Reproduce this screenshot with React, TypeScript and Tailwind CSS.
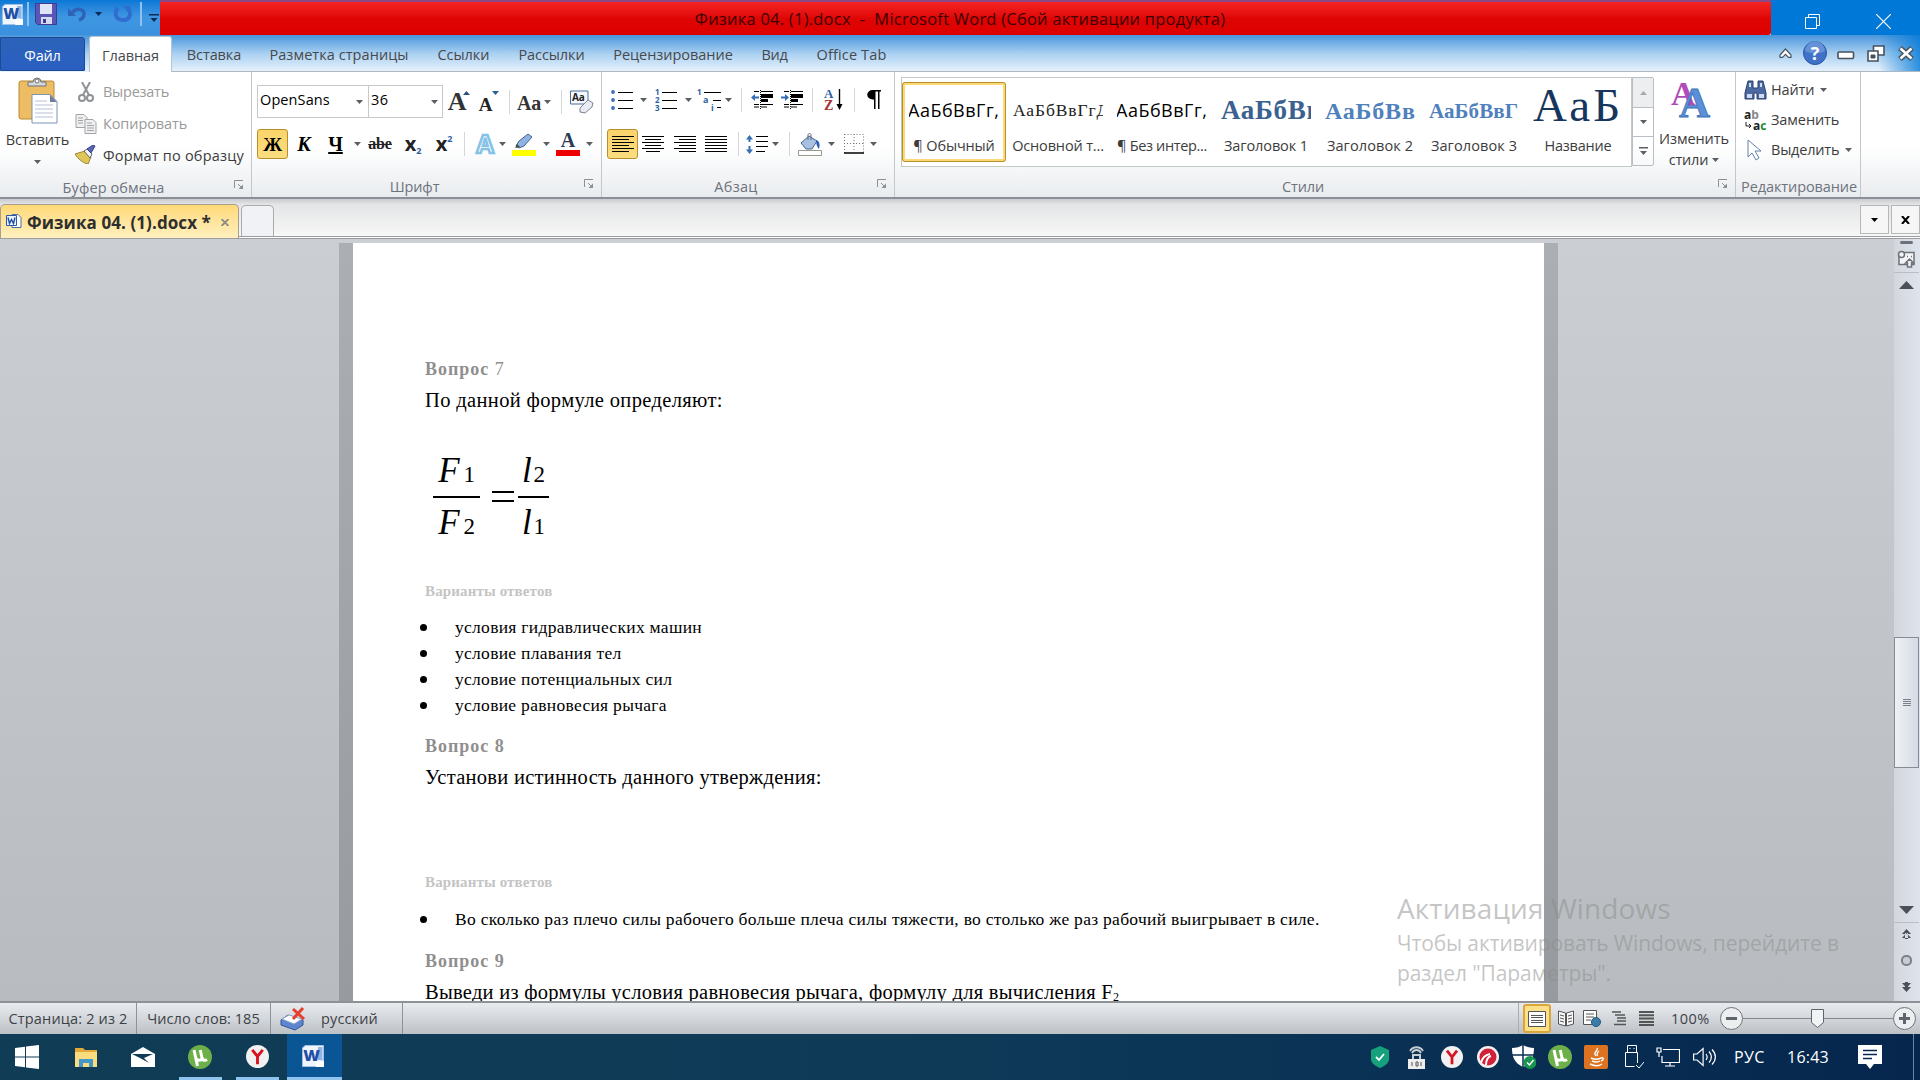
import type { ReactNode } from "react";

function Arrow({ className = "text-[#5a5f66]" }: { className?: string }) {
  return (
    <svg width="7" height="4" viewBox="0 0 7 4" className={className}>
      <path d="M0 0h7L3.500 4z" fill="currentColor" />
    </svg>
  );
}

function Launcher() {
  return (
    <svg width="10" height="10" viewBox="0 0 10 10" fill="none" stroke="#8b9097">
      <path d="M.5 8V.5H9" />
      <path d="M4 4l4 4" />
      <path d="M9 4.500V9H4.500z" fill="#8b9097" stroke="none" />
    </svg>
  );
}

function Cell({ className = "", children }: { className?: string; children?: ReactNode }) {
  return <div className={"flex h-full shrink-0 items-center justify-center whitespace-nowrap " + className}>{children}</div>;
}

function Sep({ className = "" }: { className?: string }) {
  return (
    <Cell className={className}>
      <div className="h-6 w-px bg-[#d3d6da]" />
    </Cell>
  );
}

function Group({ className = "", label, launcher = true, children }: { className?: string; label: ReactNode; launcher?: boolean; children: ReactNode }) {
  return (
    <div className={"flex h-full shrink-0 flex-col border-r border-[#c3c7cc] " + className}>
      <div className="h-[103px]">{children}</div>
      <div className="flex h-[23px] items-center text-[#6e737d]">
        <div className={"flex-1 pt-[2px] text-center " + (launcher ? "pr-[7px]" : "")}>{label}</div>
        {launcher && (
          <div className="-mt-1 w-[17px]">
            <Launcher />
          </div>
        )}
      </div>
    </div>
  );
}

function WordIcon({ size = 22 }: { size?: number }) {
  return (
    <svg width={size} height={size} viewBox="0 0 22 22">
      <path d="M3 .5h18.500v21H.5V3z" fill="#eef5fd" stroke="#9fc0e6" />
      <path d="M16 2h4.500v15H16z" fill="#8fb3e3" />
      <text x="9.500" y="15.500" textAnchor="middle" fontSize="16" fontWeight="800" fill="#1f4fa8">W</text>
      <path d="M13 17l4-2 5 1v6h-8z" fill="#fff" />
    </svg>
  );
}

function Lines({ rows }: { rows: number[][] }) {
  return (
    <svg width="22" height="17" viewBox="0 0 22 17">
      {rows.map(([x, w], i) => (
        <rect key={i} x={x} y={i * 3} width={w} height="1" fill="#000" />
      ))}
    </svg>
  );
}

const alignLeft = [[0, 22], [0, 17], [0, 22], [0, 17], [0, 22], [0, 17]];
const alignCenter = [[0, 22], [3, 16], [0, 22], [3, 16], [0, 22], [4, 14]];
const alignRight = [[0, 22], [5, 17], [0, 22], [5, 17], [0, 22], [5, 17]];
const alignJustify = [[0, 22], [0, 22], [0, 22], [0, 22], [0, 22], [0, 22]];

function TitleBar() {
  return (
    <div className="flex h-[35px]">
      <div className="flex h-full w-40 items-center bg-gradient-to-b from-[#0878d6] via-[#3f97e2] to-[#3a90de] pb-[7px]">
        <div className="ml-[2px] w-[25px]">
          <WordIcon size={21} />
        </div>
        <div className="mr-[6px] h-6 w-[2px] border-x border-[#8ec1ee] bg-[#2f72b5]" />
        <svg width="22" height="22" viewBox="0 0 22 22">
          <path d="M1 .5h20.500v21H2.500L.5 19.500V.5z" fill="#5b55b5" stroke="#3f3b93" />
          <path d="M5 1h12v10H5z" fill="#dfe5f6" />
          <path d="M6 14h11v7H6z" fill="#d6daee" />
          <path d="M8 16h3v4H8z" fill="#3f3b93" />
        </svg>
        <svg width="18" height="18" viewBox="0 0 18 18" className="ml-[11px]">
          <path d="M0 3v8h8z" fill="#2f63b8" />
          <path d="M4 8c4-6 12-4 12 1 0 3-2 5-5 6" fill="none" stroke="#2f63b8" strokeWidth="3.500" />
        </svg>
        <Arrow className="ml-[9px] text-[#0b2b50]" />
        <svg width="18" height="18" viewBox="0 0 18 18" className="ml-[12px]">
          <path d="M4 3C0 7 1 15 9 15s9-8 4-12" fill="none" stroke="#2f6ed0" strokeWidth="4" />
          <path d="M9 1h8l-2 7z" fill="#2f6ed0" />
        </svg>
        <div className="ml-[8px] h-6 w-[2px] border-x border-[#8ec1ee] bg-[#2f72b5]" />
        <svg width="10" height="8" viewBox="0 0 10 8" className="mt-2 ml-[7px]">
          <path d="M0 0h10v1.500H0zM1.500 4h7L5 8z" fill="#0b2b50" />
        </svg>
      </div>
      <div className="flex h-full w-[1611px] items-center justify-center rounded-br-[3px] border-t-2 border-[#8a4a86] bg-gradient-to-b from-[#f52222] via-[#df0505] to-[#dd0000] pt-[2px] pr-[11px] text-[16.500px] tracking-[0.23px] text-[#3d0000]">
        <span className="whitespace-pre">Физика 04. (1).docx  -  Microsoft Word (Сбой активации продукта)</span>
      </div>
      <div className="flex h-full flex-1 items-center bg-[#0078d7] pt-2">
        <svg width="15" height="15" viewBox="0 0 15 15" fill="none" stroke="#fff" className="ml-[34px]">
          <path d="M.5 3.500h11v11H.5zM3.500 3.500v-3h11v11h-3" />
        </svg>
        <svg width="15" height="15" viewBox="0 0 15 15" fill="none" stroke="#fff" className="ml-[56px]">
          <path d="M0 0l15 15M15 0L0 15" strokeWidth="1.200" />
        </svg>
      </div>
    </div>
  );
}

function MenuTabs() {
  return (
    <div className="flex h-[37px] bg-gradient-to-b from-[#4795dc] via-[#a9d0f1] to-[#e9f3fc] text-[#47494d]">
      <div className="mt-[2px] flex h-[34px] w-[85px] items-center justify-center rounded-tr-[3px] border border-[#1d4a94] bg-gradient-to-b from-[#2c63b8] to-[#2a5fc2] pt-[3px] tracking-[-0.2px] text-white">
        Файл
      </div>
      <div className="mt-px ml-1 flex h-[36px] w-[83px] items-center justify-center rounded-t-[3px] border border-b-0 border-[#b6c3d0] bg-white pt-[2px]">
        Главная
      </div>
      <div className="flex flex-1 items-center border-b border-[#aeb8c3]">
        <Cell className="ml-[15px] w-[54px] pt-[4px]">Вставка</Cell>
        <Cell className="ml-[28px] w-[140px] pt-[4px] tracking-[0.06px]">Разметка страницы</Cell>
        <Cell className="ml-[28px] w-[53px] pt-[4px] tracking-[-0.03px]">Ссылки</Cell>
        <Cell className="ml-[28px] w-[67px] pt-[4px]">Рассылки</Cell>
        <Cell className="ml-[28px] w-[120px] pt-[4px] tracking-[-0.03px]">Рецензирование</Cell>
        <Cell className="ml-[28px] w-[27px] pt-[4px] tracking-[-0.3px]">Вид</Cell>
        <Cell className="ml-[28px] w-[71px] pt-[4px] tracking-[0.15px]">Office Tab</Cell>
        <div className="flex h-full flex-1 items-center justify-end bg-gradient-to-l from-[#0078d7]/80 via-transparent via-[4%] to-transparent pr-[5px]">
          <svg width="13" height="10" viewBox="0 0 13 10" fill="#fff" stroke="#4a5661" strokeWidth="1.200">
            <path d="M1 7l5.500-6L12 7v2.400H9.500l-3-3-3 3H1z" />
          </svg>
          <svg width="24" height="24" viewBox="0 0 24 24" className="ml-[11px]">
            <circle cx="12" cy="12" r="11.500" fill="#3f72c8" stroke="#2a559f" />
            <path d="M2 10a10 10 0 0120 0c-6 3-14 3-20 0z" fill="#7ea6e2" opacity=".6" />
            <text x="12" y="18.500" textAnchor="middle" fontSize="18" fontWeight="700" fill="#fff">?</text>
          </svg>
          <svg width="18" height="9" viewBox="0 0 18 9" className="mt-1 ml-[10px]">
            <rect x="1" y="1" width="15.500" height="6.500" rx="1" fill="#fff" stroke="#46525e" strokeWidth="1.600" />
          </svg>
          <svg width="18" height="17" viewBox="0 0 18 17" fill="#fff" stroke="#46525e" strokeWidth="1.600" className="ml-[12px]">
            <path d="M6.500 1h10.500v9H6.500z" />
            <path d="M1 6h10v10H1z" />
            <path d="M4 10h4v3H4z" fill="#46525e" strokeWidth="1" />
          </svg>
          <svg width="18" height="15" viewBox="0 0 18 15" className="ml-[12px]">
            <path d="M3 2l12 11M15 2L3 13" stroke="#46525e" strokeWidth="5.500" />
            <path d="M3.500 2.500l11 10M14.500 2.500l-11 10" stroke="#fff" strokeWidth="2.600" />
          </svg>
        </div>
      </div>
    </div>
  );
}

function ClipboardGroup() {
  return (
    <Group className="w-[252px]" label={<span className="tracking-[0.1px]">Буфер обмена</span>}>
      <div className="flex h-full">
        <div className="flex w-[75px] flex-col items-center pt-[5px]">
          <svg width="40" height="47" viewBox="0 0 40 47">
            <rect x="1" y="4" width="35" height="38" rx="2" fill="#ecbd62" stroke="#b98a35" />
            <path d="M10 9V5h5a4 4 0 018 0h5v4z" fill="#d5d8dc" stroke="#6c7178" />
            <circle cx="19" cy="4" r="2" fill="#fff" stroke="#6c7178" />
            <path d="M14 17.500h18l7 7V46H14z" fill="#fff" stroke="#7d93b5" />
            <path d="M32 17.500V25h7z" fill="#6d7f9d" />
            <path d="M17 24h12M17 28h18M17 32h18M17 36h18M17 40h18" stroke="#b6c0d2" />
          </svg>
          <span className="mt-[4px] leading-6">Вставить</span>
          <Arrow className="mt-[8px] text-[#5a5f66]" />
        </div>
        <div className="flex flex-col">
          <div className="flex h-[43px] items-center tracking-[-0.25px] text-[#9a9a9a]">
            <svg width="22" height="20" viewBox="0 0 22 20" fill="none" stroke="#8f9398" strokeWidth="2" className="mr-[6px]">
              <path d="M7 0l7 13M15 0L8 13" />
              <circle cx="7" cy="16" r="3" />
              <circle cx="15" cy="16" r="3" />
            </svg>
            Вырезать
          </div>
          <div className="flex h-[22px] items-center text-[#9a9a9a]">
            <svg width="22" height="20" viewBox="0 0 22 20" fill="#f0f0f0" stroke="#a0a3a8" className="mr-[6px]">
              <path d="M1 .5h8l3 3v10H1z" />
              <path d="M10 5.500h8l3 3v11H10z" />
              <path d="M3 4h5M3 6.500h5M3 9h5M12 9h5M12 11.500h7M12 14h7M12 16.500h7" />
            </svg>
            <span className="pt-px">Копировать</span>
          </div>
          <div className="flex h-[43px] items-center tracking-[0.2px] whitespace-nowrap text-[#3c3c3c]">
            <svg width="22" height="19" viewBox="0 0 22 19" className="mr-[6px]">
              <path d="M0 9l10-3 6 6-3 7c-5-1-10-5-13-10z" fill="#e0c557" stroke="#9a8636" />
              <path d="M9 6l3-2 5 5-2 4z" fill="#f3f3f3" stroke="#666" />
              <path d="M12 4l6-4 2 1-4 7z" fill="#5967b8" stroke="#343f86" />
            </svg>
            <span className="pt-[2px]">Формат по образцу</span>
          </div>
        </div>
      </div>
    </Group>
  );
}

function FontGroup() {
  return (
    <Group className="w-[350px]" label="Шрифт">
      <div className="flex h-full flex-col pl-[5px]">
        <div className="mt-[13px] flex h-[33px]">
          <div className="flex w-[112px] items-center justify-between border border-[#c5c9ce] bg-white pr-[5px] pb-1 pl-[2px] text-black">
            <span className="tracking-[0.1px]">OpenSans</span>
            <Arrow className="mt-1 text-[#5a5f66]" />
          </div>
          <div className="-ml-px flex w-[75px] items-center justify-between border border-[#c5c9ce] bg-white pr-[4px] pb-1 pl-[2px] text-black">
            <span className="tracking-[0.4px]">36</span>
            <Arrow className="mt-1 text-[#5a5f66]" />
          </div>
          <Cell className="w-8 text-[#333]">
            <span className="text-[26px] leading-none font-bold [font-family:'Liberation_Serif']">A</span>
            <svg width="7" height="4" viewBox="0 0 7 4" className="-mt-[18px] -ml-[3px]"><path d="M0 4h7L3.500 0z" fill="#2b4f80" /></svg>
          </Cell>
          <Cell className="w-7 text-[#222]">
            <span className="mt-[5px] text-[19px] leading-none font-bold [font-family:'Liberation_Serif']">A</span>
            <Arrow className="-mt-[18px] text-[#2b5f90]" />
          </Cell>
          <Sep className="w-3" />
          <Cell className="w-7 text-[#333]"><span className="mt-[2px] text-[20px] leading-none font-bold [font-family:'Liberation_Serif']">Aa</span></Cell>
          <Cell className="w-[9px]"><Arrow /></Cell>
          <Sep className="w-[18px]" />
          <Cell className="w-6">
            <svg width="24" height="24" viewBox="0 0 24 24">
              <path d="M.5 1h17.500v13H.5z" fill="#f4f8fc" stroke="#4b6f9e" />
              <text x="2" y="11" fontSize="10" fontWeight="700" fill="#222">Aa</text>
              <path d="M10 18l8-8 5 3-1 4-7 6-5-1z" fill="#e9ebf3" stroke="#7d8497" />
            </svg>
          </Cell>
        </div>
        <div className="mt-[11px] flex h-[30px]">
          <Cell className="w-[31px] rounded-[3px] border border-[#b98f2c] bg-gradient-to-b from-[#fbd46a] to-[#fbdd80] text-black">
            <span className="text-[19px] leading-none font-bold [font-family:'Liberation_Serif']">Ж</span>
          </Cell>
          <Cell className="w-8 text-[20px] font-bold text-black italic [font-family:'Liberation_Serif']">К</Cell>
          <Cell className="w-[31px] text-[20px] font-bold text-black underline decoration-2 [font-family:'Liberation_Serif']">Ч</Cell>
          <Cell className="w-[13px]"><Arrow /></Cell>
          <Cell className="w-8 text-[16px] font-bold text-[#222] line-through [font-family:'Liberation_Serif']">abe</Cell>
          <Cell className="w-[34px] text-[#222]">
            <span className="text-[20px] leading-none font-bold">x</span>
            <span className="mt-3 text-[9px] leading-none font-bold text-[#2e5fa3]">2</span>
          </Cell>
          <Cell className="w-7 text-[#222]">
            <span className="text-[20px] leading-none font-bold">x</span>
            <span className="-mt-3 text-[9px] leading-none font-bold text-[#2e5fa3]">2</span>
          </Cell>
          <Sep className="w-[13px]" />
          <Cell className="w-[27px]">
            <svg width="24" height="24" viewBox="0 0 24 24">
              <text x="12" y="21" textAnchor="middle" fontSize="25" fontWeight="700" fill="#fff" stroke="#85c2e6" strokeWidth="2.500">A</text>
            </svg>
          </Cell>
          <Cell className="w-[9px]"><Arrow /></Cell>
          <Cell className="w-[34px]">
            <svg width="24" height="23" viewBox="0 0 24 23">
              <path d="M4 13l3-5 9-7 4 3-8 9-5 2z" fill="#8fb4e2" stroke="#46618f" />
              <path d="M3 15l2-4 3 3z" fill="#444" />
              <path d="M0 17h24v6H0z" fill="#ffff00" />
            </svg>
          </Cell>
          <Cell className="w-[10px]"><Arrow /></Cell>
          <Cell className="w-[34px]">
            <svg width="24" height="23" viewBox="0 0 24 23">
              <text x="12" y="14" textAnchor="middle" fontSize="20" fontWeight="700" fill="#2a3a57" fontFamily="Liberation Serif">A</text>
              <path d="M0 17h24v6H0z" fill="#ee0000" />
            </svg>
          </Cell>
          <Cell className="w-[8px]"><Arrow /></Cell>
        </div>
      </div>
    </Group>
  );
}

function Indent({ flip = false }: { flip?: boolean }) {
  return (
    <svg width="22" height="19" viewBox="0 0 22 19">
      <path d="M3 1.500h5M10 1.500h12M3 14.500h5M10 14.500h12M3 17h5M10 17h6" stroke="#000" />
      <path d="M9.500 0v19" stroke="#000" strokeDasharray="1 1" />
      <path d="M10 4h12v4H10zM10 9h7v3H10z" fill="#000" />
      <path d={flip ? "M8 7.500L4 4v2.500H0v2h4V11z" : "M0 7.500L4 4v2.500h4v2H4V11z"} fill="#3470b8" />
    </svg>
  );
}

function ParagraphGroup() {
  return (
    <Group className="w-[293px]" label={<span className="tracking-[0.3px]">Абзац</span>}>
      <div className="flex h-full flex-col pl-[5px]">
        <div className="mt-[13px] flex h-[29px]">
          <Cell className="w-[30px]">
            <svg width="22" height="20" viewBox="0 0 22 20">
              {[2, 10, 18].map((y) => (
                <g key={y}>
                  <circle cx="2" cy={y} r="1.900" fill="#3e6fb5" />
                  <path d={`M7 ${y + 0.5}h15`} stroke="#000" />
                </g>
              ))}
            </svg>
          </Cell>
          <Cell className="w-[13px]"><Arrow /></Cell>
          <Cell className="w-8">
            <svg width="22" height="22" viewBox="0 0 22 22">
              {[1, 2, 3].map((n) => (
                <g key={n}>
                  <text x="0" y={n * 8 - 2} fontSize="8" fontWeight="700" fill="#2e5fa3">{n}</text>
                  <path d={`M7 ${n * 8 - 4.5}h15`} stroke="#000" />
                </g>
              ))}
            </svg>
          </Cell>
          <Cell className="w-[13px]"><Arrow /></Cell>
          <Cell className="w-[29px]">
            <svg width="25" height="24" viewBox="0 0 25 24">
              <text x="0" y="7" fontSize="8" fontWeight="700" fill="#2e5fa3">1</text>
              <text x="6" y="15" fontSize="9" fontWeight="700" fill="#2e5fa3">a</text>
              <text x="14" y="23" fontSize="9" fontWeight="700" fill="#2e5fa3">i</text>
              <path d="M7 4.500h17M16 12.500h8M20 19.500h4" stroke="#000" />
            </svg>
          </Cell>
          <Cell className="w-[9px]"><Arrow /></Cell>
          <Sep className="w-4" />
          <Cell className="w-[25px]"><Indent /></Cell>
          <Cell className="w-[35px]"><Indent flip /></Cell>
          <Sep className="w-[6px]" />
          <Cell className="w-[37px]">
            <svg width="20" height="23" viewBox="0 0 20 23">
              <text x="0" y="10" fontSize="13" fontWeight="700" fill="#2e5fa3" fontFamily="Liberation Serif">A</text>
              <text x="0" y="22" fontSize="14" fontWeight="700" fill="#a33030" fontFamily="Liberation Serif">Z</text>
              <path d="M15.500 1v16" stroke="#000" strokeWidth="1.400" />
              <path d="M12.500 16h6l-3 6z" fill="#000" />
            </svg>
          </Cell>
          <Sep className="w-1" />
          <Cell className="w-9">
            <svg width="14" height="19" viewBox="0 0 14 19">
              <path d="M14 0H5.500a5 4.500 0 000 9.500H7V19h1.500V1.500h2.500V19h1.500V1.500H14z" fill="#000" />
            </svg>
          </Cell>
        </div>
        <div className="mt-[15px] flex h-[30px]">
          <Cell className="w-[31px] rounded-[3px] border border-[#b98f2c] bg-gradient-to-b from-[#fbd46a] to-[#fbdd80]"><Lines rows={alignLeft} /></Cell>
          <Cell className="w-[30px]"><Lines rows={alignCenter} /></Cell>
          <Cell className="w-[33px]"><Lines rows={alignRight} /></Cell>
          <Cell className="w-[30px]"><Lines rows={alignJustify} /></Cell>
          <Sep className="w-[14px]" />
          <Cell className="w-6">
            <svg width="22" height="19" viewBox="0 0 22 19">
              <path d="M3.500 0L7 4.500H4.500V7h-2V4.500H0zM3.500 19L7 14.500H4.500V11h-2v3.500H0z" fill="#3470b8" />
              <path d="M10 1.500h12M10 6.500h12M10 11.500h12M10 16.500h9" stroke="#000" />
            </svg>
          </Cell>
          <Cell className="w-[13px]"><Arrow /></Cell>
          <Sep className="w-[14px]" />
          <Cell className="w-7">
            <svg width="24" height="23" viewBox="0 0 24 23">
              <path d="M3 10l8-7 8 5-5 8H8z" fill="#a9c1e0" stroke="#4a6591" />
              <path d="M18 7c4 1 4 5 3 9-2-2-3-5-3-9z" fill="#2e5fb8" />
              <path d="M10 7V2c0-2 3-2 3 0v5" fill="none" stroke="#5d6b80" />
              <path d="M.5 17.500h23v5H.5z" fill="#fff" stroke="#9a9a8a" />
            </svg>
          </Cell>
          <Cell className="w-[14px]"><Arrow /></Cell>
          <Cell className="w-8">
            <svg width="20" height="20" viewBox="0 0 20 20">
              <path d="M.5.5h19v18M.5 0v19M10 0v18M0 9.500h20" fill="none" stroke="#777" strokeDasharray="1 2" />
              <path d="M0 19h20" stroke="#000" strokeWidth="1.500" />
            </svg>
          </Cell>
          <Cell className="w-[7px]"><Arrow /></Cell>
        </div>
      </div>
    </Group>
  );
}

const styles = [
  { name: "¶ Обычный", sample: "АаБбВвГг,", cls: "-ml-px text-[18px] tracking-[0.5px] text-black", label: "tracking-[-0.15px]" },
  { name: "Основной т...", sample: "АаБбВвГгД", cls: "text-[17.500px] tracking-[0.9px] text-[#222] [font-family:'Liberation_Serif']", label: "tracking-[-0.15px]" },
  { name: "¶ Без интер...", sample: "АаБбВвГг,", cls: "-ml-px text-[18px] tracking-[0.5px] text-black", label: "tracking-[-0.35px]" },
  { name: "Заголовок 1", sample: "АаБбВв", cls: "text-[27px] tracking-[0.7px] font-bold text-[#3a618f] [font-family:'Liberation_Serif']", label: "" },
  { name: "Заголовок 2", sample: "АаБбВв", cls: "text-[24px] tracking-[0.8px] font-bold text-[#4f81bd] [font-family:'Liberation_Serif']", label: "tracking-[0.1px]" },
  { name: "Заголовок 3", sample: "АаБбВвГ", cls: "pt-[2px] text-[21px] tracking-[0.1px] font-bold text-[#4f81bd] [font-family:'Liberation_Serif']", label: "tracking-[0.1px]" },
  { name: "Название", sample: "АаБ", cls: "-mt-[10px] text-[47px] tracking-[3px] text-[#17365d] [font-family:'Liberation_Serif']", label: "tracking-[-0.2px]" },
];

function StylesGroup() {
  return (
    <Group className="w-[841px]" label="Стили">
      <div className="flex pt-[5px] pl-[6px]">
        <div className="flex h-[90px] w-[731px] border border-[#c3cac5] bg-white pt-[4px]">
          {styles.map((s, i) => (
            <div key={s.name} className={"flex h-20 w-[104px] shrink-0 flex-col items-center rounded-[3px] " + (i === 0 ? "border-[3px] border-[#fcd876] outline outline-[#b98f2c] -outline-offset-1" : "py-[3px]")}>
              <div className="flex h-[51px] w-[90px] items-center overflow-hidden whitespace-nowrap">
                <span className={s.cls}>{s.sample}</span>
              </div>
              <span className={"leading-5 whitespace-nowrap " + s.label}>{s.name}</span>
            </div>
          ))}
        </div>
        <div className="flex h-[89px] w-[22px] flex-col rounded-r-[2px] border border-[#b9bec4]">
          <Cell className="h-[30px]! border-b border-[#b9bec4] bg-[#eceef0]"><svg width="7" height="4" viewBox="0 0 7 4"><path d="M0 4h7L3.500 0z" fill="#a5a9ae" /></svg></Cell>
          <Cell className="h-[29px]! border-b border-[#b9bec4]"><Arrow /></Cell>
          <Cell className="h-[28px]!">
            <svg width="9" height="8" viewBox="0 0 9 8"><path d="M0 0h9v1.500H0zM1 4h7L4.500 8z" fill="#5a5f66" /></svg>
          </Cell>
        </div>
        <div className="flex flex-1 flex-col items-center pt-[3px]">
          <svg width="40" height="39" viewBox="0 0 40 39" className="mr-[8px]">
            <text x="0" y="25" fontSize="34" fontWeight="700" fill="#b04cba" fontFamily="Liberation Serif">A</text>
            <text x="8" y="37" fontSize="43" fontWeight="700" fill="#5b8fd8" stroke="#3d6fb5" strokeWidth=".8" fontFamily="Liberation Serif">A</text>
          </svg>
          <span className="mt-[9px] mr-px leading-[21px]">Изменить</span>
          <span className="mr-px flex items-center gap-1 leading-[21px] tracking-[-0.2px]">стили <Arrow /></span>
        </div>
      </div>
    </Group>
  );
}

function EditingGroup() {
  return (
    <Group className="w-[125px]" launcher={false} label={<span className="ml-[2px]">Редактирование</span>}>
      <div className="flex flex-col pt-[3px] pl-2">
        <div className="flex h-[30px] items-center">
          <svg width="23" height="20" viewBox="0 0 23 20" className="mr-1">
            <path d="M4 1h5v7h5V1h5l3 12v6h-9v-6h-3v6H1v-6z" fill="#4c68a0" stroke="#2b3f6c" />
            <path d="M3 14h5v4H3zM15 14h5v4h-5zM5 3h2v4H5zM16 3h2v4h-2z" fill="#cfdbf0" />
          </svg>
          <span className="tracking-[-0.15px]">Найти</span>
          <Arrow className="ml-[6px] text-[#5a5f66]" />
        </div>
        <div className="flex h-[30px] items-center">
          <svg width="23" height="21" viewBox="0 0 23 21" className="mr-1">
            <text x="0" y="9" fontSize="12" fontWeight="700" fill="#222">a<tspan fill="#888">b</tspan></text>
            <text x="9" y="20" fontSize="12" fontWeight="700" fill="#222">a<tspan fill="#1d8a2b">c</tspan></text>
            <path d="M2 12v4h4M5 14l2 2-2 2" fill="none" stroke="#222" />
          </svg>
          <span className="tracking-[-0.1px]">Заменить</span>
        </div>
        <div className="flex h-[30px] items-center">
          <svg width="23" height="22" viewBox="0 0 23 22" className="mr-1">
            <path d="M4 1v17l4-4 4 7 3-2-4-7h6z" fill="#fff" stroke="#6580ad" />
          </svg>
          <span className="tracking-[-0.2px]">Выделить</span>
          <Arrow className="ml-[6px] text-[#5a5f66]" />
        </div>
      </div>
    </Group>
  );
}

function DocTabs() {
  return (
    <div className="flex h-[37px] items-end bg-gradient-to-b from-[#c9cbce] via-[#e4e5e6] via-[15%] to-[#f7f7f7]">
      <div className="relative z-10 -mb-[2px] flex h-[34px] w-[239px] items-center rounded-t-[5px] border border-b-0 border-[#a5a08e] bg-gradient-to-b from-[#ffd977] to-[#fff0bf] pt-[2px] pl-[5px] text-[#2e2e2e]">
        <svg width="16" height="16" viewBox="0 0 16 16" className="-mt-1">
          <path d="M6 1.500h6l3 3v10H6z" fill="#fff" stroke="#4e6fa6" />
          <path d="M.5 2.500h10v10H.5z" fill="#eaf2fc" stroke="#2f5aa5" />
          <path d="M2 4.500l1.500 6 2-4 2 4 1.500-6" fill="none" stroke="#1f4fa8" strokeWidth="1.400" />
        </svg>
        <span className="ml-[5px] text-[17px] tracking-[0.09px] font-bold whitespace-nowrap">Физика 04. (1).docx *</span>
        <svg width="8" height="7" viewBox="0 0 8 7" className="ml-[10px]"><path d="M.5 0l7 7M7.500 0l-7 7" stroke="#8a8a80" strokeWidth="1.800" /></svg>
      </div>
      <div className="ml-[2px] h-[31px] w-[33px] rounded-t-[5px] border border-b-0 border-[#a9abae] bg-[#f0f2f6]" />
      <div className="flex h-full flex-1 items-center justify-end pt-[4px]">
        <Cell className="mr-[2px] h-[29px]! w-[29px] border border-[#b5b7ba] bg-[#f6f6f6]"><Arrow className="text-black" /></Cell>
        <Cell className="h-[29px]! w-[29px] border border-[#b5b7ba] bg-[#f6f6f6]">
          <svg width="9" height="8" viewBox="0 0 9 8"><path d="M1 0l7 8M8 0L1 8" stroke="#000" strokeWidth="2" /></svg>
        </Cell>
      </div>
    </div>
  );
}

const answers = ["условия гидравлических машин", "условие плавания тел", "условие потенциальных сил", "условие равновесия рычага"];

function Answer({ text }: { text: string }) {
  return (
    <li className="flex h-[25.750px] items-center text-[17.500px] leading-[25px] tracking-[0.29px] whitespace-nowrap">
      <span className="-ml-[5px] h-[7px] w-[7px] rounded-full bg-black" />
      <span className="ml-[28px]">{text}</span>
    </li>
  );
}

function Fraction({ className, top, bottom }: { className: string; top: ReactNode; bottom: ReactNode }) {
  return (
    <div className={"flex flex-col items-center " + className}>
      <div className="flex h-9 items-baseline text-[35px] leading-9">{top}</div>
      <div className="mt-[7px] mb-[7px] h-[2px] w-full bg-black" />
      <div className="flex h-9 items-baseline text-[35px] leading-9">{bottom}</div>
    </div>
  );
}

function Question({ className = "", n }: { className?: string; n: ReactNode }) {
  return <p className={"h-6 text-[18px] leading-6 font-bold tracking-[0.98px] text-[#8f8f8f] " + className}>Вопрос {n}</p>;
}

function Document() {
  return (
    <div className="flex h-[762px] overflow-hidden bg-gradient-to-b from-[#cbced2] to-[#b8bcc0] pt-1">
      <div className="ml-[339px] h-full w-[14px] bg-gradient-to-b from-[#abafb3] to-[#979a9e]" />
      <div className="h-full w-[1191px] bg-white px-[72px] pt-[114px] text-black [font-family:'Liberation_Serif',serif]">
        <Question n={<span className="font-normal">7</span>} />
        <p className="mt-[7px] h-6 text-[20.500px] leading-6 tracking-[0.36px]">По данной формуле определяют:</p>
        <div className="mt-[41px] flex h-[88px]">
          <Fraction
            className="ml-2 w-[47px]"
            top={<><i>F</i><span className="ml-[4px] text-[23px]">1</span></>}
            bottom={<><i>F</i><span className="ml-[4px] text-[23px]">2</span></>}
          />
          <div className="mt-[38px] ml-3 h-[11px] w-[22px] border-y-2 border-black" />
          <Fraction
            className="ml-1 w-[31px]"
            top={<><i>l</i><span className="ml-[2px] text-[23px]">2</span></>}
            bottom={<><i>l</i><span className="ml-[2px] text-[23px]">1</span></>}
          />
        </div>
        <p className="mt-[40px] h-5 text-[15px] leading-5 font-bold tracking-[0.13px] text-[#c4c4c4]">Варианты ответов</p>
        <ul className="mt-[14px]">
          {answers.map((a) => (
            <Answer key={a} text={a} />
          ))}
        </ul>
        <Question className="mt-[16px]" n="8" />
        <p className="mt-[7px] h-6 text-[20.500px] leading-6 tracking-[0.28px]">Установи истинность данного утверждения:</p>
        <p className="mt-[83px] h-5 text-[15px] leading-5 font-bold tracking-[0.13px] text-[#c4c4c4]">Варианты ответов</p>
        <ul className="mt-[15px]">
          <Answer text="Во сколько раз плечо силы рабочего больше плеча силы тяжести, во столько же раз рабочий выигрывает в силе." />
        </ul>
        <Question className="mt-[16px]" n="9" />
        <p className="mt-[7px] h-6 text-[20.500px] leading-6 tracking-[0.27px] whitespace-nowrap">
          Выведи из формулы условия равновесия рычага, формулу для вычисления F<sub className="bottom-[-2px] text-[12px]">2</sub>
        </p>
      </div>
      <div className="h-full w-[14px] bg-gradient-to-b from-[#abafb3] to-[#979a9e]" />
      <div className="-mt-1 ml-auto flex h-[762px] w-[26px] flex-col items-center bg-gradient-to-r from-[#d3d7dd] to-[#dfe3ec] pr-px">
        <div className="mt-[2px] h-[3px] w-[13px] rounded-sm bg-[#6d7278]" />
        <svg width="19" height="18" viewBox="0 0 19 18" fill="#f4f4f6" stroke="#6d7278" strokeWidth="1.500" className="mt-[6px]">
          <path d="M5 2.500h12v12H2V6" />
          <circle cx="4.500" cy="4.500" r="3" />
          <path d="M12.500 9l4 4h-2v4h-4v-4h-2z" />
          <path d="M10 6.500h1M14 6.500h1" />
        </svg>
        <div className="mt-[4px] h-px w-full bg-[#b9bec6]" />
        <svg width="15" height="8" viewBox="0 0 15 8" className="mt-[8px]"><path d="M0 8h15L7.500 0z" fill="#4c5157" /></svg>
        <div className="mt-[348px] flex h-[131px] w-[25px] flex-col items-center justify-center gap-px border border-[#858b95] bg-gradient-to-r from-[#eff1f4] to-[#d6dae4]">
          {[0, 1, 2, 3].map((n) => (
            <div key={n} className="h-px w-2 bg-[#7c828b]" />
          ))}
        </div>
        <svg width="15" height="8" viewBox="0 0 15 8" className="mt-[138px]"><path d="M0 0h15L7.500 8z" fill="#4c5157" /></svg>
        <div className="mt-[8px] h-px w-full bg-[#b9bec6]" />
        <svg width="9" height="10" viewBox="0 0 9 10" className="mt-[6px]"><path d="M0 5h9L4.500 0zM0 9h9L4.500 4zM3 4h3v6H3z" fill="#4c5157" /></svg>
        <div className="mt-[16px] h-[11px] w-[11px] rounded-[5px] border-2 border-[#7c8187] bg-[#c9cdd3]" />
        <svg width="9" height="10" viewBox="0 0 9 10" className="mt-[16px]"><path d="M0 1h9L4.500 6zM0 5h9L4.500 10zM3 0h3v6H3z" fill="#4c5157" /></svg>
      </div>
    </div>
  );
}

function StatusBar() {
  return (
    <div className="flex h-[33px] items-center border-t-2 border-[#8e9297] bg-gradient-to-b from-[#e9ecef] via-[#d3d7db] to-[#bcc1c6] text-[#3d4147]">
      <Cell className="w-[137px] border-r border-[#8d9298] tracking-[0.17px]">Страница: 2 из 2</Cell>
      <Cell className="w-[134px] border-r border-[#8d9298] tracking-[0.06px]">Число слов: 185</Cell>
      <Cell className="w-[43px]">
        <svg width="26" height="24" viewBox="0 0 26 24">
          <path d="M1 13l7-5 15 5v5l-8 5-14-5z" fill="#5d86cf" stroke="#31549c" />
          <path d="M2 12l7-4 13 4-8 5z" fill="#fff" stroke="#8fa5c8" />
          <path d="M13 2l11 10M23 1L13 12" stroke="#e6402e" strokeWidth="3" />
        </svg>
      </Cell>
      <Cell className="w-[89px] border-r border-[#8d9298] pr-[17px] tracking-[0.15px]">русский</Cell>
      <Cell className="mr-1 ml-auto w-px"><div className="h-full w-px bg-[#a8adb3]" /></Cell>
      <Cell className="h-[29px]! w-[28px] rounded-[3px] border-2 border-[#dba53a] bg-[#fce08a]">
        <svg width="18" height="16" viewBox="0 0 18 16"><path d="M.5.5h17v15H.5z" fill="#fff" stroke="#555" /><path d="M3 4.500h12M3 6.500h12M3 9.500h12M3 11.500h12" stroke="#555" /></svg>
      </Cell>
      <svg width="16" height="17" viewBox="0 0 16 17" fill="#f7f7f7" stroke="#555" className="ml-[7px]"><path d="M.5 1l7 2v13l-7-2zM15.500 1l-7 2v13l7-2z" /><path d="M2 5l4 1M2 8l4 1M2 11l4 1M14 5l-4 1M14 8l-4 1M14 11l-4 1" /></svg>
      <svg width="18" height="17" viewBox="0 0 18 17" className="ml-[9px]"><path d="M.5.5h13v14H.5z" fill="#fff" stroke="#555" /><path d="M3 4h8M3 7h8M3 10h5" stroke="#555" /><circle cx="13" cy="12" r="4.500" fill="#3c7da8" stroke="#24577a" /></svg>
      <svg width="14" height="15" viewBox="0 0 14 15" stroke="#555" strokeWidth="1.500" className="ml-[11px]"><path d="M0 1h9M3 4h10M5 7h9M5 10h9M2 13.500h12" /></svg>
      <svg width="15" height="15" viewBox="0 0 15 15" stroke="#555" strokeWidth="2" className="ml-[13px]"><path d="M0 1h15M0 4.300h15M0 7.600h15M0 10.900h15M0 14h15" /></svg>
      <span className="ml-[17px] w-[40px] tracking-[0.5px]">100%</span>
      <div className="ml-[9px] flex h-[23px] w-[23px] items-center justify-center rounded-full border border-[#6e7379] bg-[#eceef0]"><div className="h-[3px] w-[11px] bg-[#5f656c]" /></div>
      <div className="flex h-full w-[150px] items-center">
        <div className="h-px w-[68px] bg-[#83888e]" />
        <svg width="13" height="19" viewBox="0 0 13 19"><path d="M.5.5h12v13l-6 5-6-5z" fill="#f2f3f5" stroke="#5f656c" /></svg>
        <div className="h-px flex-1 bg-[#83888e]" />
      </div>
      <div className="mr-[4px] flex h-[23px] w-[23px] items-center justify-center rounded-full border border-[#6e7379] bg-[#eceef0]">
        <svg width="11" height="11" viewBox="0 0 11 11"><path d="M4 0h3v4h4v3H7v4H4V7H0V4h4z" fill="#5f656c" /></svg>
      </div>
    </div>
  );
}

function UTorrent({ size }: { size: number }) {
  return (
    <svg width={size} height={size} viewBox="0 0 24 24">
      <circle cx="12" cy="12" r="12" fill="#6db04a" />
      <path d="M6 5l3.500 16M7.500 12c1 4.500 6 4 6.500 1l-1.700-8M14 13c.8 2.500 3 3 5 1.500" fill="none" stroke="#fff" strokeWidth="3" />
    </svg>
  );
}

function Yandex({ size }: { size: number }) {
  return (
    <svg width={size} height={size} viewBox="0 0 24 24">
      <circle cx="12" cy="12" r="12" fill="#f1f1f1" />
      <path d="M6.500 5l5.500 7 5.500-7M12 12v8" fill="none" stroke="#d8121e" strokeWidth="3" />
    </svg>
  );
}

function Taskbar() {
  return (
    <div className="flex h-[46px] items-center bg-gradient-to-r from-[#113c55] via-[#0e3a58] to-[#06264e] text-white">
      <svg width="24" height="24" viewBox="0 0 24 24" fill="#fff" className="ml-[15px]"><path d="M0 3l10-1.300V11.400H0zM11 1.600L24 0v11.400H11zM0 12.500h10v9.800L0 21zM11 12.500h13V24l-13-1.600z" /></svg>
      <svg width="22" height="19" viewBox="0 0 22 19" className="ml-[36px]"><path d="M0 0h8l2 2h12v17H0z" fill="#e5a93b" /><path d="M0 4h22v15H0z" fill="#f9dc7e" /><path d="M4 19v-8h14v8h-4v-4H8v4z" fill="#4596c9" /></svg>
      <svg width="24" height="20" viewBox="0 0 24 20" className="ml-[34px]"><path d="M0 7l12-7 12 7v13H0z" fill="#fff" /><path d="M1 7h21l-9 4 5 5-9-5z" fill="#0f3b57" /></svg>
      <div className="ml-[24px] flex h-full w-[43px] flex-col items-center justify-between pt-[11px]"><div className="mr-px"><UTorrent size={24} /></div><div className="h-[3px] w-full bg-[#8fc4ef]" /></div>
      <div className="ml-[14px] flex h-full w-[43px] flex-col items-center justify-between pt-[11px]"><Yandex size={23} /><div className="h-[3px] w-full bg-[#8fc4ef]" /></div>
      <div className="ml-[8px] flex h-full w-[55px] flex-col items-center justify-between bg-[#0a5594] pt-[11px]"><div className="mr-[3px]"><WordIcon size={22} /></div><div className="h-[3px] w-full bg-[#8fc4ef]" /></div>
      <svg width="18" height="22" viewBox="0 0 18 22" className="ml-auto"><path d="M9 0l9 4v9c0 4-4 7-9 9-5-2-9-5-9-9V4z" fill="#17a07c" /><path d="M5 11l3 3 5-6" fill="none" stroke="#fff" strokeWidth="1.800" /></svg>
      <svg width="17" height="23" viewBox="0 0 17 23" fill="none" stroke="#c9cdd2" className="ml-[19px]"><path d="M2 5c3-5 10-5 13 0M4 7c2-4 7-4 9 0" strokeWidth="1.800" /><path d="M5 13V9h7v4" strokeWidth="2" /><path d="M0 13h17v10H0z" fill="#eee" stroke="none" /><path d="M4 16v4M8 16v4h2v-4H8M13 16v4" stroke="#555" /></svg>
      <div className="ml-[16px]"><Yandex size={22} /></div>
      <svg width="22" height="22" viewBox="0 0 22 22" className="ml-[14px]"><circle cx="11" cy="11" r="11" fill="#f5f1f1" /><circle cx="11" cy="11" r="8.500" fill="#d2203a" /><path d="M4 17c1-5 4-8 9-9M9 19c0-5 2-8 5-9" fill="none" stroke="#fff" strokeWidth="2" /></svg>
      <svg width="24" height="24" viewBox="0 0 24 24" className="ml-[13px]"><path d="M11 0c3 2 7 3 11 3 0 8-2 15-11 19C2 18 0 11 0 3c4 0 8-1 11-3z" fill="#fff" /><path d="M11 0v22M0 10h22" stroke="#0a2f54" strokeWidth="1.500" /><circle cx="18" cy="17.500" r="6.500" fill="#17964f" /><path d="M15 17.500l2.500 2.500 4-5" fill="none" stroke="#fff" strokeWidth="1.500" /></svg>
      <div className="ml-[12px]"><UTorrent size={24} /></div>
      <svg width="24" height="24" viewBox="0 0 24 24" className="ml-[12px]"><rect width="24" height="24" rx="2" fill="#dd7321" /><path d="M13 3c2 3-5 4-1 8M15 6c-3 2-1 3-2 5M7 13c3 1.500 7 1.500 10 0M8 16c3 1.200 6 1.200 8 0M6 19c4 2 9 2 12 0M17 13c3-1 3 2 0 3" fill="none" stroke="#fff" strokeWidth="1.400" /></svg>
      <svg width="19" height="24" viewBox="0 0 19 24" fill="none" stroke="#fff" className="ml-[17px]"><path d="M2.500 7V.5h9V7M5 3v1M9 3v1M12.500 18V7.500H.5v14h9M11 20l3 3 5-6" /></svg>
      <svg width="24" height="20" viewBox="0 0 24 20" fill="none" stroke="#fff" strokeWidth="1.200" className="ml-[12px]"><path d="M7 2.500h16.500v13H6V9M14 15.500v3.500M9 19h10M1 1h4v4H1zM3 5v5" /></svg>
      <svg width="23" height="20" viewBox="0 0 23 20" fill="none" stroke="#fff" strokeWidth="1.200" className="ml-[13px]"><path d="M.6 7v6h3.500l6 5.500v-17L4 7zM13 7c1.500 2 1.500 4 0 6M16 4.500c3 3.500 3 7.500 0 11M19 2.500c4.500 4.500 4.500 10.500 0 15" /></svg>
      <span className="ml-[18px] w-[31px] text-[16px] tracking-[0.4px]">РУС</span>
      <span className="ml-[22px] w-[42px] text-[16px] tracking-[0.24px]">16:43</span>
      <svg width="24" height="24" viewBox="0 0 24 24" className="ml-[29px]"><path d="M0 0h24v19h-8l-4 5-4-5H0z" fill="#fff" /><path d="M5 5.500h14M5 9.500h14M5 13.500h9" stroke="#07294f" strokeWidth="1.500" /></svg>
      <div className="mr-[6px] ml-[31px] h-full w-px bg-[#6d84a0]" />
    </div>
  );
}

export default function App() {
  return (
    <div className="relative flex h-[1080px] w-[1920px] flex-col overflow-hidden bg-[#cbced2] text-[14.500px] tracking-[-0.1px] text-[#3c3c3c] [font-family:'Open_Sans','Noto_Sans',sans-serif]">
      <TitleBar />
      <MenuTabs />
      <div className="flex h-[127px] border-b-2 border-[#8b8f97] bg-gradient-to-b from-white via-white via-[60%] to-[#e9ecef]">
        <ClipboardGroup />
        <FontGroup />
        <ParagraphGroup />
        <StylesGroup />
        <EditingGroup />
      </div>
      <DocTabs />
      <div className="h-[3px] border-y border-[#9a9c9f] bg-white" />
      <Document />
      <StatusBar />
      <Taskbar />
      <div className="pointer-events-none absolute top-[889px] left-[1397px] whitespace-nowrap text-[#8c8c8c]/50">
        <p className="text-[28px] leading-[38px] tracking-[0.1px]">Активация Windows</p>
        <p className="mt-px text-[21px] leading-[30px] tracking-[-0.13px]">Чтобы активировать Windows, перейдите в</p>
        <p className="text-[21px] leading-[30px] tracking-[-0.1px]">раздел "Параметры".</p>
      </div>
    </div>
  );
}
